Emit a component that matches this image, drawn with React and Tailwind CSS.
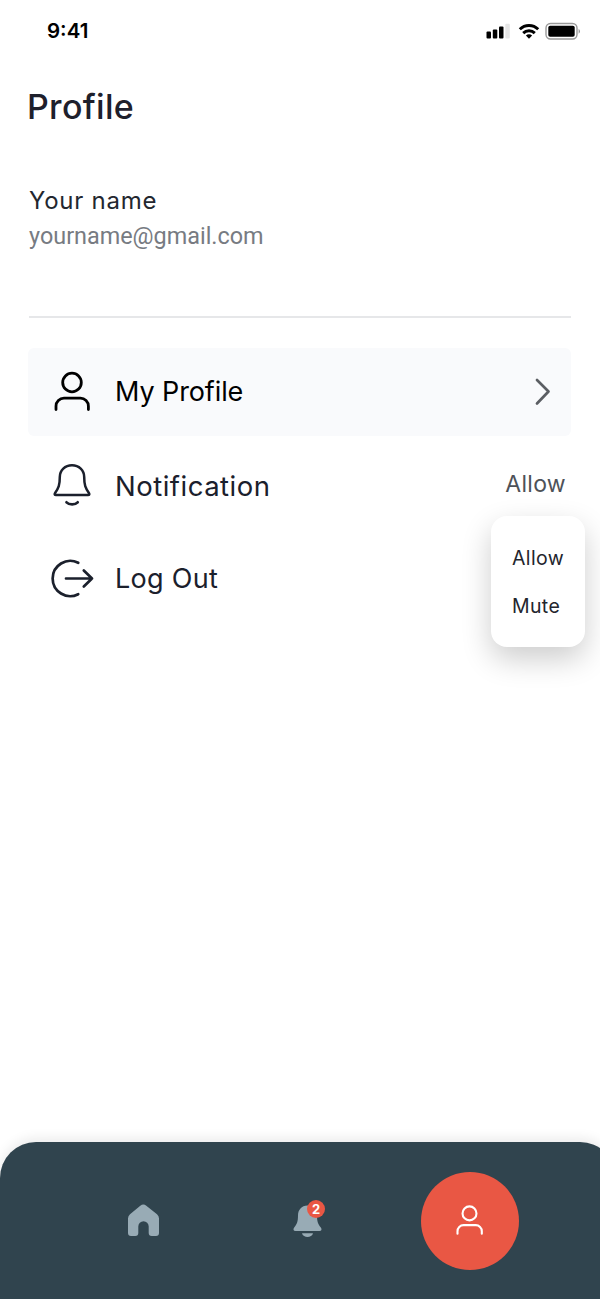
import React, { useState } from "react";

const UserIcon = ({ className, strokeWidth = 2.8 }) => (
  <svg
    viewBox="0 0 44 44"
    fill="none"
    stroke="currentColor"
    strokeWidth={strokeWidth}
    strokeLinecap="round"
    className={className}
  >
    <circle cx="22" cy="12.5" r="9.3" />
    <path d="M6 39.5v-3.3a8 8 0 0 1 8-8h16.4a8 8 0 0 1 8 8v3.3" />
  </svg>
);

const BellIcon = () => (
  <svg
    viewBox="0 0 44 44"
    fill="none"
    stroke="currentColor"
    strokeWidth="2.5"
    strokeLinecap="round"
    strokeLinejoin="round"
    className="h-11 w-11"
  >
    <path d="M22 2.200c-7 0-12.200 5-12.200 11.800 0 8-1.200 11-4.700 15.900-.8 1.200-.5 2.200.9 2.200h32c1.400 0 1.700-1 .9-2.200-3.500-4.900-4.700-7.900-4.700-15.900C34.200 7.200 29 2.200 22 2.200Z" />
    <path d="M16.500 39.300c2.500 2.700 8.800 2.700 11.200 0" strokeWidth="2.700" />
  </svg>
);

const LogOutIcon = () => (
  <svg
    viewBox="0 0 44 44"
    fill="none"
    stroke="currentColor"
    strokeWidth="2.7"
    strokeLinecap="round"
    strokeLinejoin="round"
    className="h-11 w-11"
  >
    <path d="M28.200 5.800A17.600 17.600 0 1 0 28.200 37.200" />
    <path d="M16 21.500h26M33.800 13.500l8.200 8-8.200 8" />
  </svg>
);

const StatusBar = () => (
  <div className="flex h-[62px] items-center justify-between pl-[47px] pr-5">
    <span className="text-[20.5px] font-semibold text-black">9:41</span>
    <svg viewBox="0 0 94 18" className="h-[18px] w-[94px]">
      {/* Signal */}
      <rect x="0.500" y="9.500" width="4.500" height="7" rx="1" />
      <rect x="6.800" y="7.500" width="4.500" height="9" rx="1" />
      <rect x="13" y="4.500" width="4.500" height="12" rx="1" />
      <rect x="19.300" y="1.800" width="4.500" height="14.700" rx="1" fill="#e6e6e6" />
      {/* Wifi */}
      <g fill="none" stroke="black" strokeWidth="2.900">
        <path d="M33.800 7.300a13 13 0 0 1 18.400 0" />
        <path d="M37.200 11.100a8.200 8.200 0 0 1 11.600 0" />
      </g>
      <path d="M43 16.700 39.900 13.600a4.400 4.400 0 0 1 6.200 0Z" />
      {/* Battery */}
      <rect x="60" y="1.500" width="31" height="15.500" rx="4.500" fill="none" stroke="#999" strokeWidth="1.400" />
      <rect x="62.300" y="3.800" width="26.400" height="10.900" rx="1.800" />
      <path d="M92.600 6.800q1.400 1 1.400 2.500t-1.400 2.500Z" fill="#999" />
    </svg>
  </div>
);

const MenuRow = ({ icon, label, active, labelClass, children }) => (
  <div
    className={`flex items-center rounded-md pl-[22px] ${
      active ? "h-[88px] bg-[#f9fafc] text-black" : "h-[94px] text-[#1b202c]"
    }`}
  >
    {icon}
    <span className={`ml-[21px] whitespace-nowrap ${labelClass}`}>{label}</span>
    <div className="ml-auto">{children}</div>
  </div>
);

const BottomNav = () => (
  <nav className="flex h-[157px] w-[616px] shrink-0 items-center rounded-t-[36px] bg-[#30444e] shadow-[0_-4px_12px_rgba(0,0,0,0.08)]">
    <button className="ml-[127px] text-[#98abb5]">
      <svg viewBox="0 0 33 33" fill="currentColor" className="h-[33px] w-[33px]">
        <path d="M13.300 1.700q3-2.400 6 0L30 10.300q2 1.700 2 4.300V29q0 3-3 3h-4.300q-3 0-3-3v-6.500a5.200 5.200 0 0 0-10.400 0V29q0 3-3 3H4q-3 0-3-3V14.600q0-2.600 2-4.300Z" />
      </svg>
    </button>
    <button className="relative ml-[131px] text-[#98abb5]">
      <svg viewBox="0 0 33 33" fill="currentColor" className="h-[33px] w-[33px]">
        <path d="M16.500 1.500C10.500 1.500 7 6 7 11.500c0 6-1 8.500-3.800 12-1.400 1.900-.7 3.500 1.300 3.500h24c2 0 2.700-1.600 1.300-3.500C27 20 26 17.500 26 11.500c0-5.500-3.500-10-9.500-10Z" />
        <path d="M11 29.200h11c-1.200 5-9.800 5-11 0Z" />
      </svg>
      <span className="absolute -top-[4px] left-[16px] flex h-[18px] w-[18px] items-center justify-center rounded-full bg-[#e95744] text-[13px] font-bold leading-none text-white">
        2
      </span>
    </button>
    <button className="ml-[97px] flex h-[98px] w-[98px] items-center justify-center rounded-full bg-[#e95744] pr-[2px] text-white">
      <UserIcon className="h-[33px] w-[33px]" strokeWidth={2.8} />
    </button>
  </nav>
);

const App = () => {
  const [permission, setPermission] = useState("Allow");

  return (
    <div className="flex h-[1299px] w-[600px] flex-col overflow-hidden bg-white font-['Inter',sans-serif]">
      <StatusBar />

      <main className="flex-1 px-7">
        <h1 className="mt-[21px] text-[34px] font-medium leading-[48px] tracking-[0.3px] text-[#1e202c]">
          <span className="-ml-px">Profile</span>
        </h1>

        {/* Account */}
        <div className="mt-[54px] pl-px">
          <p className="text-[24px] leading-8 tracking-[0.75px] text-[#23272f]">
            <span>Your name</span>
          </p>
          <p className="mt-[3px] font-['Roboto',sans-serif] text-[23.4px] leading-8 text-[#777b82]">
            <span>yourname@gmail.com</span>
          </p>
        </div>
        <hr className="ml-px mr-px mt-16 border-t-2 border-[#e6e7e9]" />

        {/* Menu */}
        <div className="mt-[30px] w-[543px]">
          <MenuRow
            icon={<UserIcon className="h-11 w-11" />}
            label="My Profile"
            labelClass="pt-px text-[27px] tracking-[-0.1px]"
            active
          >
            <svg
              viewBox="0 0 18 30"
              fill="none"
              stroke="#5b5e63"
              strokeWidth="2.700"
              strokeLinecap="round"
              strokeLinejoin="round"
              className="mr-[19px] h-[30px] w-[18px]"
            >
              <path d="M3 3 14.500 14.500 3 26.500" />
            </svg>
          </MenuRow>
          <div className="pt-[2px]">
            <MenuRow
              icon={<BellIcon />}
              label="Notification"
              labelClass="pt-[3px] text-[27.5px] tracking-[0.5px]"
            >
              <div className="relative mr-[5px] -mt-[2px] text-[23px] tracking-[0.3px] text-[#4e5258]">
                <button>{permission}</button>
                <div className="absolute -right-[19px] top-[49px] flex h-[131px] w-[94px] flex-col items-start justify-center gap-5 rounded-2xl bg-white pl-[21px] pt-[2px] text-[19.5px] leading-7 tracking-[0.35px] text-[#23252d] shadow-[0_12px_30px_rgba(0,0,0,0.2)]">
                  <button onClick={() => setPermission("Allow")}>Allow</button>
                  <button onClick={() => setPermission("Mute")}>Mute</button>
                </div>
              </div>
            </MenuRow>
            <MenuRow
              icon={<LogOutIcon />}
              label="Log Out"
              labelClass="pt-px text-[27px] tracking-[0.3px]"
            />
          </div>
        </div>
      </main>

      <BottomNav />
    </div>
  );
};

export default App;
